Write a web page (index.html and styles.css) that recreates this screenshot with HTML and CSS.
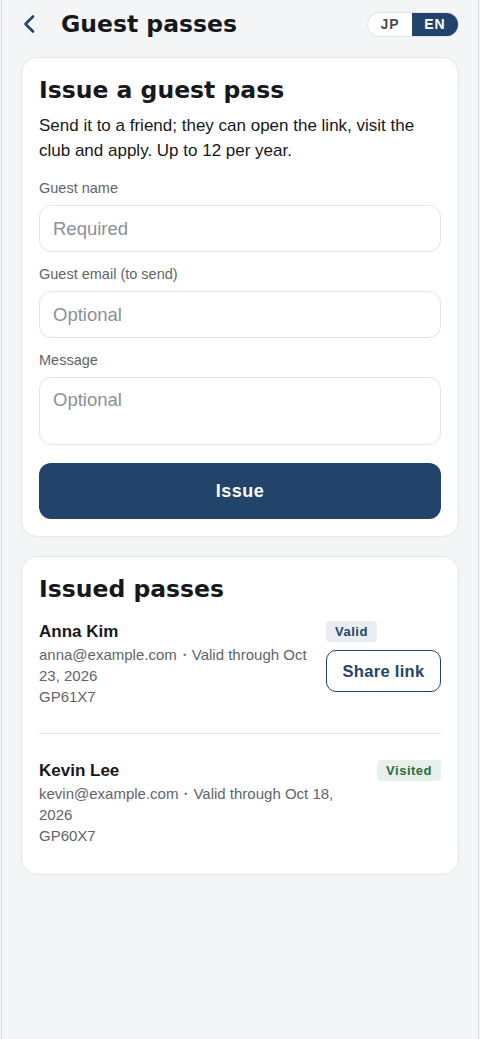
FILE: index.html
```html
<!DOCTYPE html>
<html lang="en">
<head>
<meta charset="UTF-8">
<meta name="viewport" content="width=device-width, initial-scale=1.0">
<title>Guest passes</title>
<link rel="stylesheet" href="styles.css">
</head>
<body>

<div class="app">
    <header class="topbar">
        <button class="back" aria-label="Back">
            <svg width="16" height="20" viewBox="0 0 16 20"><path d="M12 2.5 L4.5 10 L12 17.5" fill="none" stroke="#22446b" stroke-width="2.6" stroke-linecap="round" stroke-linejoin="round"/></svg>
        </button>
        <h1 class="page-title">Guest passes</h1>
        <div class="lang-toggle">
            <span class="lang">JP</span>
            <span class="lang active">EN</span>
        </div>
    </header>

    <section class="card">
        <h2>Issue a guest pass</h2>
        <p class="intro">Send it to a friend; they can open the link, visit the club and apply. Up to 12 per year.</p>
        <form class="issue-form">
            <label for="guest-name">Guest name</label>
            <input type="text" id="guest-name" placeholder="Required">
            <label for="guest-email">Guest email (to send)</label>
            <input type="email" id="guest-email" placeholder="Optional">
            <label for="guest-message">Message</label>
            <textarea id="guest-message" placeholder="Optional"></textarea>
            <button type="submit" class="issue-button">Issue</button>
        </form>
    </section>

    <section class="card">
        <h2>Issued passes</h2>
        <div class="pass">
            <div class="pass-info">
                <div class="pass-name">Anna Kim</div>
                <div class="pass-meta">anna@example.com・Valid through Oct 23, 2026</div>
                <div class="pass-meta">GP61X7</div>
            </div>
            <div class="pass-side">
                <span class="badge badge-valid">Valid</span>
                <button class="share-button">Share link</button>
            </div>
        </div>
        <div class="pass">
            <div class="pass-info">
                <div class="pass-name">Kevin Lee</div>
                <div class="pass-meta">kevin@example.com・Valid through Oct 18, 2026</div>
                <div class="pass-meta">GP60X7</div>
            </div>
            <div class="pass-side">
                <span class="badge badge-visited">Visited</span>
            </div>
        </div>
    </section>
</div>

</body>
</html>
```

FILE: styles.css
```css
body {
    margin: 0;
    font-family: "Liberation Sans", Arial, sans-serif;
    background-color: #f4f5f7;
    color: #16181b;
}
.app {
    margin: 0 1px;
    min-height: 100vh;
    box-sizing: border-box;
    padding: 0 19px 40px;
    border-left: 1px solid #d9dce1;
    border-right: 1px solid #d9dce1;
}
.topbar {
    display: flex;
    align-items: center;
    height: 46px;
    padding-top: 1px;
    margin-bottom: 10px;
}
.back {
    display: flex;
    align-items: center;
    justify-content: center;
    width: 16px;
    height: 24px;
    padding: 0;
    margin-left: 0;
    border: none;
    background: none;
    cursor: pointer;
}
.page-title {
    flex: 1;
    margin: 0 0 0 24px;
    font-family: "DejaVu Sans", sans-serif;
    font-size: 23.5px;
    font-weight: bold;
    line-height: 30px;
}
.lang-toggle {
    display: flex;
    height: 25px;
    border: 1px solid #dfe2e6;
    border-radius: 13px;
    overflow: hidden;
    background-color: #fff;
    box-sizing: border-box;
}
.lang {
    display: flex;
    align-items: center;
    justify-content: center;
    width: 44px;
    font-size: 14px;
    font-weight: bold;
    letter-spacing: 1px;
    color: #4b5057;
}
.lang.active {
    width: 46px;
    background-color: #22446b;
    color: #fff;
}
.card {
    margin-bottom: 19px;
    padding: 17px;
    background-color: #fff;
    border: 1px solid #e2e5e9;
    border-radius: 16px;
}
.card h2 {
    margin: 0;
    font-family: "DejaVu Sans", sans-serif;
    font-size: 23.5px;
    font-weight: bold;
    line-height: 30px;
}
.intro {
    margin: 8px 0 15px;
    font-size: 17px;
    line-height: 25px;
}
.issue-form {
    display: flex;
    flex-direction: column;
}
.issue-form label {
    font-size: 14.5px;
    line-height: 20px;
    color: #5f646b;
    margin-bottom: 7px;
}
.issue-form input,
.issue-form textarea {
    box-sizing: border-box;
    width: 100%;
    height: 47px;
    margin-bottom: 12px;
    padding: 0 13px;
    font-family: "Liberation Sans", Arial, sans-serif;
    font-size: 18.5px;
    color: #16181b;
    border: 1.5px solid #e1e4e8;
    border-radius: 12px;
    background-color: #fff;
}
.issue-form textarea {
    height: 68px;
    padding-top: 11px;
    margin-bottom: 18px;
    resize: none;
}
.issue-form ::placeholder {
    color: #8a9099;
}
.issue-button {
    height: 56px;
    border: none;
    border-radius: 12px;
    background-color: #22446b;
    color: #fff;
    font-family: "Liberation Sans", Arial, sans-serif;
    font-size: 18px;
    font-weight: bold;
    letter-spacing: 0.5px;
    cursor: pointer;
}
.card h2 + .pass {
    margin-top: 17px;
}
.pass {
    display: flex;
    align-items: flex-start;
    gap: 10px;
}
.pass + .pass {
    margin-top: 26px;
    padding-top: 26px;
    border-top: 1.5px solid #e3e6ea;
}
.pass:last-child {
    margin-bottom: 11px;
}
.pass-info {
    flex: 1;
}
.pass-name {
    font-size: 17px;
    font-weight: bold;
    line-height: 22px;
    margin-bottom: 1px;
}
.pass-meta {
    font-size: 15px;
    line-height: 21px;
    color: #5f646b;
}
.pass-side {
    display: flex;
    flex-direction: column;
    align-items: flex-start;
    gap: 8px;
}
.badge {
    display: inline-block;
    padding: 0 9px;
    height: 21px;
    line-height: 21px;
    border-radius: 4px;
    font-size: 13px;
    font-weight: bold;
    letter-spacing: 0.5px;
}
.badge-valid {
    background-color: #e9edf1;
    color: #22446b;
}
.badge-visited {
    background-color: #e5f1e9;
    color: #2d6a43;
}
.share-button {
    width: 115px;
    height: 42px;
    padding: 0;
    border: 1.5px solid #22446b;
    border-radius: 10px;
    background-color: #fff;
    color: #22446b;
    font-family: "Liberation Sans", Arial, sans-serif;
    font-size: 16.5px;
    font-weight: bold;
    letter-spacing: 0.3px;
    cursor: pointer;
}
```
